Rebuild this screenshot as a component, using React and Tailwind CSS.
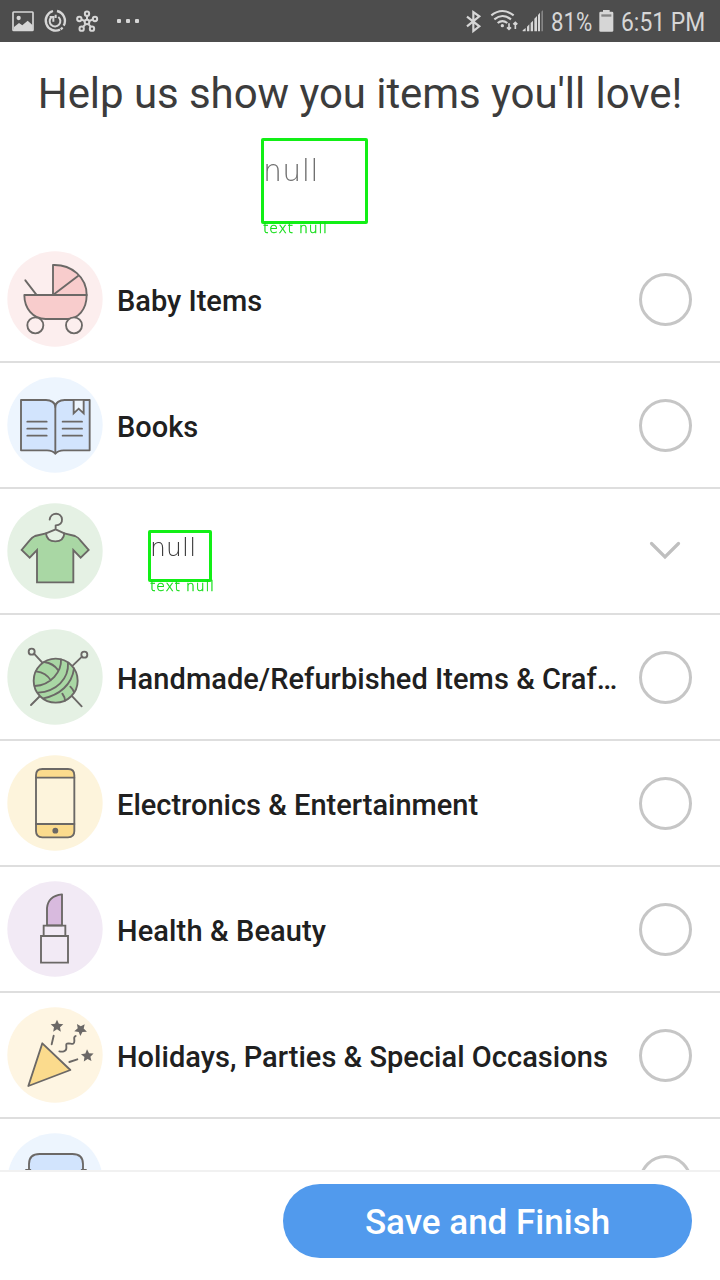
import React from "react";

const INK = "#6b6866";

function RowIcon({ viewBox, cx, cy, bg, children }) {
  return (
    <svg viewBox={viewBox} className="h-24 w-24 shrink-0" fill="none" stroke={INK} strokeWidth="5.6" strokeLinecap="round" strokeLinejoin="round">
      <circle cx={cx} cy={cy} r="143" fill={bg} stroke="none" />
      {children}
    </svg>
  );
}

function Stroller() {
  return (
    <RowIcon viewBox="21 33 288 288" cx="165" cy="177" bg="#fceeee">
      <path d="M159 165V75C215 73 260 112 260 165Z" fill="#f8cccc" />
      <path d="M159 165L234 108" />
      <path d="M73 165H260C260 210 233 237 202 237H137C98 237 73 204 73 165Z" fill="#f8cccc" />
      <path d="M76 121L109 164" />
      <circle cx="106" cy="256" r="24" fill="#fceeee" />
      <circle cx="222" cy="256" r="24" fill="#fceeee" />
    </RowIcon>
  );
}

function Book() {
  return (
    <RowIcon viewBox="21 33 288 288" cx="165" cy="177" bg="#edf5fe">
      <path d="M63 102H138C153 102 166 110 166 123C166 110 179 102 194 102H269V253H191C179 253 171 257 166 263C161 257 153 253 141 253H63Z" fill="#d2e4fd" />
      <path d="M166 123V262M82 167H140M82 188H140M82 209H140M188 167H246M188 188H246M188 209H246" />
      <path d="M221 104V142L236 128L251 142V104" fill="#edf5fe" strokeLinejoin="miter" />
    </RowIcon>
  );
}

function Shirt() {
  return (
    <RowIcon viewBox="21 33 288 288" cx="165" cy="177" bg="#e5f1e4">
      <path d="M138 124L105 132Q96 136 89 145L65 174L89 197L111 174V271H220V174L242 197L266 174L241 145Q235 136 225 132L193 124Q191 148 166 148Q140 148 138 124Z" fill="#a9d7a4" strokeLinejoin="miter" />
      <path d="M138 124L167 112L193 124M167 112V100C180 100 187 92 186 82C185 60 152 59 149 83" />
    </RowIcon>
  );
}

function Yarn() {
  return (
    <RowIcon viewBox="21 27 288 288" cx="165" cy="171" bg="#e5f1e4">
      <path d="M102 101L127 128M93 255L120 228M246 110L218 137M214 226L245 259" />
      <circle cx="95" cy="95" r="9" />
      <circle cx="253" cy="104" r="9" />
      <circle cx="167" cy="182" r="66" fill="#a9d7a4" />
      <path d="M183 118C185 154 154 195 104 198M204 128C207 177 169 214 114 218M222 145C216 194 178 225 130 235M133 126Q160 130 175 151M108 154Q139 158 152 181M187 221Q195 232 195 242M211 200Q220 209 222 217" />
    </RowIcon>
  );
}

function Phone() {
  return (
    <RowIcon viewBox="21 30 288 288" cx="165" cy="174" bg="#fdf4dc">
      <path d="M108 98V91Q108 72 127 72H204Q223 72 223 91V98ZM108 237H223V258Q223 277 204 277H127Q108 277 108 258Z" fill="#fbdb8d" />
      <path d="M108 98V237M223 98V237" />
      <circle cx="166" cy="257" r="6" fill={INK} />
    </RowIcon>
  );
}

function Lipstick() {
  return (
    <RowIcon viewBox="21 408 288 288" cx="165" cy="552" bg="#f2eaf5">
      <path d="M141 541V489Q144 453 186 448V541Z" fill="#d8bade" />
      <path d="M131 573V542H196V573M123 573H204V653H123Z" strokeLinejoin="miter" />
    </RowIcon>
  );
}

const STAR = "M0-18L5.500-6L19-4.500L9 4.500L11.500 18L0 11L-11.500 18L-9 4.500L-19-4.500L-5.500-6Z";

function Party() {
  return (
    <RowIcon viewBox="21 21 288 288" cx="165" cy="165" bg="#fef5e2">
      <path d="M127 130L211 210L85 258Z" fill="#fbdb8d" />
      <path d="M161 107L155 133M208 186L232 178M178 154C186 156 199 155 199 145C200 135 195 130 206 130C216 131 223 135 223 124C224 116 219 111 227 108" />
      <g fill={INK} stroke="none">
        <path transform="translate(171 77)" d={STAR} />
        <path transform="translate(243 87) rotate(38)" d={STAR} />
        <path transform="translate(262 166) rotate(-3)" d={STAR} />
      </g>
    </RowIcon>
  );
}

function Sofa() {
  return (
    <RowIcon viewBox="21 399 288 288" cx="165" cy="543" bg="#edf5fe">
      <path d="M87 508V492Q87 462 119 462H217Q249 462 249 492V508V560H87Z" fill="#d2e4fd" />
      <path d="M78 510H91M245 510H258" />
    </RowIcon>
  );
}

function TaggedBox({ boxClass, textClass, captionClass }) {
  return (
    <div className={`relative border-[3px] border-[#12ef16] font-['DejaVu_Sans'] font-extralight whitespace-nowrap will-change-transform ${boxClass}`}>
      <div className={textClass}>null</div>
      <div className={`absolute text-[14px] leading-none text-[#12dc16] [-webkit-text-stroke:0.35px_#12dc16] ${captionClass}`}>text null</div>
    </div>
  );
}

function Row({ icon, label, trackingClass = "", children, expandable }) {
  return (
    <div className="flex h-[126px] shrink-0 items-center border-b-2 border-[#dedede] pr-7 pl-[7px]">
      {icon}
      {children}
      {label && <div className={`ml-[14px] pt-1 text-[29px] leading-9 font-medium whitespace-nowrap text-[#202020] ${trackingClass}`}>{label}</div>}
      {expandable ? (
        <svg className="mr-[11px] ml-auto h-5 w-8" viewBox="0 0 32 20" fill="none" stroke="#bfbfbf" strokeWidth="3.2" strokeLinecap="round">
          <path d="M2.5 2.500L16 16L29.500 2.500" />
        </svg>
      ) : (
        <div className="ml-auto h-[53px] w-[53px] shrink-0 rounded-full border-3 border-[#c6c6c6]" />
      )}
    </div>
  );
}

function StatusBar() {
  return (
    <div className="flex h-[42px] shrink-0 items-center bg-[#4d4d4d] text-[#d6d6d6]">
      <svg className="h-[42px] w-[150px]" viewBox="0 0 450 126" fill="none" stroke="#d6d6d6" strokeWidth="6">
        <rect x="39" y="36" width="60" height="55" rx="2" strokeWidth="5" />
        <circle cx="56" cy="54" r="6.500" fill="#d6d6d6" stroke="none" />
        <path d="M42 81L57 69L67 76L83 62L98 76V91H42Z" fill="#d6d6d6" stroke="none" />
        <path d="M159 33A30 30 0 1 0 180 89M171 33A30 30 0 0 1 191 77M188 83L182 88" strokeWidth="7" />
        <path d="M154 52A16 16 0 1 0 175 51M149 51H160V65M167 44V54" />
        <circle cx="261" cy="66" r="7" />
        <path d="M261 48V59M245 59L254 63M277 59L268 63M250 80L256 73M272 80L266 73" />
        <circle cx="261" cy="41" r="6.500" />
        <circle cx="238" cy="57" r="6.500" />
        <circle cx="285" cy="57" r="6.500" />
        <circle cx="245" cy="86" r="6.500" />
        <circle cx="276" cy="86" r="6.500" />
        <g fill="#d6d6d6" stroke="none">
          <rect x="351" y="57" width="12" height="12" rx="3" />
          <rect x="378" y="57" width="12" height="12" rx="3" />
          <rect x="405" y="57" width="12" height="12" rx="3" />
        </g>
      </svg>
      <svg className="ml-[310px] h-[42px] w-[90px]" viewBox="30 0 270 126" fill="none" stroke="#d6d6d6" strokeWidth="6.5">
        <path d="M51 50L88 79L70 93V36L88 49L51 79" />
        <path d="M124 46Q157 20 191 46M133 58Q157 38 183 58M143 69Q157 58 172 69" strokeWidth="6.5" />
        <circle cx="157" cy="77" r="5" fill="#d6d6d6" stroke="none" />
        <path d="M177 70V88M171 82L177 88L183 82M196 87V67M190 73L196 67L202 73" strokeWidth="5" />
        <path d="M218 94V91L227 84V94ZM231 94V80L238 73V94ZM242 94V69L249 62V94ZM253 94V56L261 48V94ZM264 94V45L270 38V94Z" fill="#d6d6d6" stroke="none" />
        <path d="M274 94V35L279 30V94Z" fill="#858585" stroke="none" />
      </svg>
      <div className="ml-px w-[48px] pt-0.5 text-[25px] leading-none whitespace-nowrap">
        <span className="inline-block origin-left scale-x-[0.89]">81%</span>
      </div>
      <svg className="h-[22px] w-[15px]" viewBox="0 0 45 66">
        <path d="M1 9Q1 5 5 5H12V0H32V5H39Q43 5 43 9V62Q43 65 39 65H5Q1 65 1 62Z" fill="#d6d6d6" />
        <path d="M7 13H37V20H7Z" fill="#858585" />
      </svg>
      <div className="ml-[7px] pt-0.5 text-[25px] leading-none whitespace-nowrap">
        <span className="inline-block origin-left scale-x-[0.915]">6:51 PM</span>
      </div>
    </div>
  );
}

export default function App() {
  return (
    <div className="flex h-[1280px] w-[720px] flex-col overflow-hidden bg-white font-[Roboto,sans-serif]">
      <StatusBar />
      <header className="flex h-[195px] shrink-0 flex-col items-center pt-[27px]">
        <h1 className="text-[42px] leading-[50px] font-normal tracking-[-0.06px] whitespace-nowrap text-[#3c3c3c]">Help us show you items you'll love!</h1>
        <TaggedBox
          boxClass="mt-[19px] mr-[91px] h-[86px] w-[107px] rounded-[2px]"
          textClass="-ml-px pt-[12px] text-[30px] leading-[36px] tracking-[0.3px] text-[#707070]"
          captionClass="top-[80px] left-[-1px] tracking-[0.8px]"
        />
      </header>
      <main className="flex min-h-0 flex-1 flex-col overflow-hidden">
        <Row icon={<Stroller />} label="Baby Items" />
        <Row icon={<Book />} label="Books" />
        <Row icon={<Shirt />} expandable>
          <TaggedBox
            boxClass="mt-[9px] ml-[45px] h-[52px] w-[64px] rounded-[2px]"
            textClass="-ml-px text-[25px] leading-[29px] tracking-[0.2px] text-[#3a3a3a]"
            captionClass="top-[46px] left-[-1px] tracking-[0.8px]"
          />
        </Row>
        <Row icon={<Yarn />} label="Handmade/Refurbished Items & Craf…" trackingClass="tracking-[0.05px]" />
        <Row icon={<Phone />} label="Electronics & Entertainment" />
        <Row icon={<Lipstick />} label="Health & Beauty" trackingClass="tracking-[0.12px]" />
        <Row icon={<Party />} label="Holidays, Parties & Special Occasions" trackingClass="tracking-[0.03px]" />
        <Row icon={<Sofa />} />
      </main>
      <footer className="flex h-[110px] shrink-0 justify-end border-t-2 border-[#f1f1f1] pt-3 pr-7">
        <button className="h-[74px] w-[409px] rounded-full bg-[#519aed] pt-1 text-[35px] font-medium text-white">Save and Finish</button>
      </footer>
    </div>
  );
}
